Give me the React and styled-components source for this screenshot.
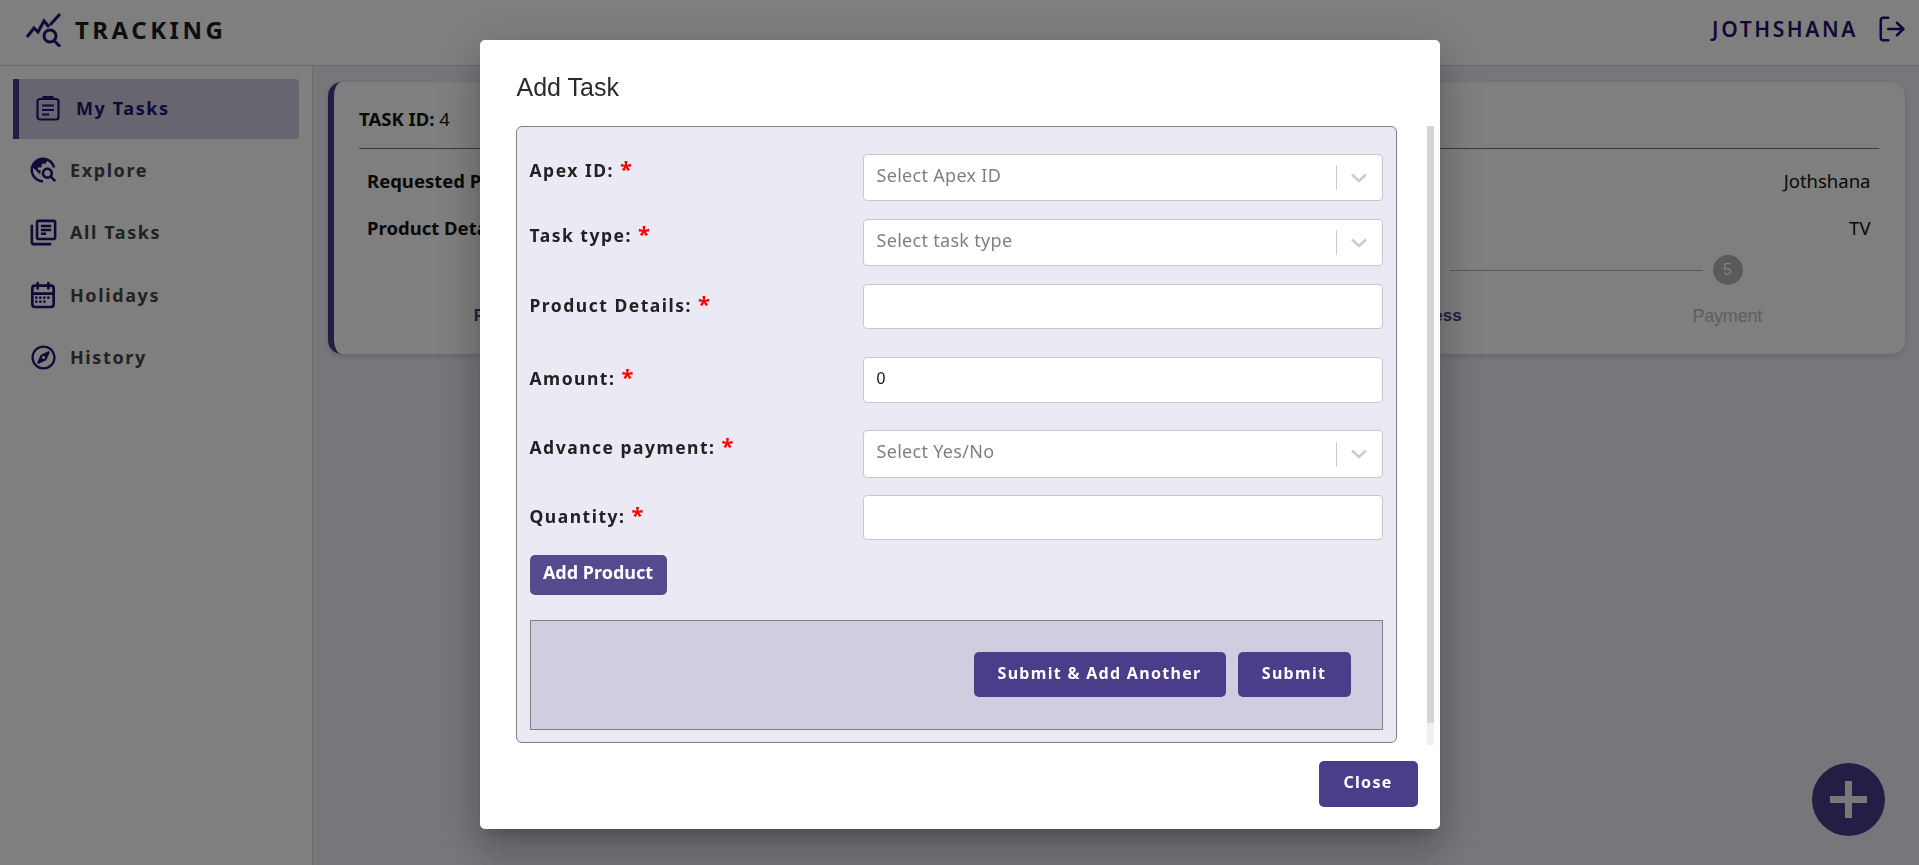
import styled, { createGlobalStyle } from "styled-components";
import { MdTravelExplore, MdOutlineLibraryBooks } from "react-icons/md";
import { TbCalendarMonth } from "react-icons/tb";
import { FaRegCompass } from "react-icons/fa";
import { FiLogOut } from "react-icons/fi";

const GlobalStyle = createGlobalStyle`
  html, body {
    margin: 0;
    height: 100%;
    overflow: hidden;
    background: #eeeef7;
    font-family: "Noto Sans", "Open Sans", sans-serif;
  }
  * { box-sizing: border-box; }
`;

const Page = styled.div`
  height: 865px;
  display: flex;
  flex-direction: column;
`;

const Header = styled.header`
  height: 66px;
  flex: none;
  background: #fff;
  border-bottom: 1px solid #d8d8d8;
  display: flex;
  align-items: center;
  justify-content: space-between;
  padding: 0 12px 0 26px;
`;

const Brand = styled.div`
  display: flex;
  align-items: center;
  gap: 13px;
  font-size: 24px;
  font-weight: 700;
  letter-spacing: 3.5px;
  color: #1c1c1c;
  margin-top: -6px;
`;

const UserBox = styled.div`
  display: flex;
  align-items: center;
  gap: 19px;
  font-size: 21px;
  font-weight: 600;
  letter-spacing: 2.6px;
  color: #1f1170;
  margin-top: -8px;
`;

const Body = styled.div`
  flex: 1;
  display: flex;
  min-height: 0;
`;

const Sidebar = styled.nav`
  width: 313px;
  flex: none;
  background: #fff;
  border-right: 1px solid #d8d8d8;
  padding: 13px 13px 0;
`;

const NavItem = styled.div`
  display: flex;
  align-items: center;
  height: ${(p) => (p.$active ? "60px" : "62.5px")};
  gap: ${(p) => (p.$active ? "12px" : "11px")};
  padding-left: ${(p) => (p.$active ? "13px" : "14px")};
  padding-bottom: ${(p) => (p.$active ? "3px" : "1px")};
  border-left: ${(p) => (p.$active ? "6px solid #4b3d89" : "0")};
  border-radius: ${(p) => (p.$active ? "0 4px 4px 0" : "0")};
  background: ${(p) => (p.$active ? "#cdcbe0" : "transparent")};
  color: ${(p) => (p.$active ? "#1f1170" : "#444")};
  font-size: 18px;
  font-weight: 700;
  letter-spacing: 1.6px;
`;

const IconSlot = styled.span`
  width: 32px;
  flex: none;
  display: flex;
  justify-content: center;
  color: #1f1170;
`;

const Main = styled.main`
  flex: 1;
  padding: 16px 15px 0 15px;
`;

const TaskCard = styled.section`
  height: 272px;
  background: #fff;
  border-left: 6px solid #4b3d89;
  border-radius: 14px;
  box-shadow: 0 2px 6px rgba(0, 0, 0, 0.15);
  padding: 23px 26px 0 25px;
`;

const TaskId = styled.div`
  font-size: 18.5px;
  line-height: 28px;
  color: #111;
  padding-bottom: 15px;
  border-bottom: 1px solid #777;
  b { font-weight: 700; }
`;

const InfoRow = styled.div`
  display: flex;
  justify-content: space-between;
  font-size: 18.5px;
  line-height: 28px;
  color: #111;
  padding: 0 8px;
  margin-top: ${(p) => p.$top}px;
  b { font-weight: 700; }
`;

const StepLine = styled.div`
  display: flex;
  align-items: center;
  padding: 0 136px 0 143px;
  margin-top: 13px;
`;

const Circle = styled.div`
  width: 30px;
  height: 30px;
  flex: none;
  border-radius: 50%;
  background: #b4b4b4;
  color: #fff;
  display: flex;
  align-items: center;
  justify-content: center;
  font: 16px "Liberation Sans", Arial, sans-serif;
`;

const Connector = styled.div`
  flex: 1;
  height: 1px;
  margin: 0 10px;
  background: #b4b4b4;
`;

const StepLabels = styled.div`
  display: grid;
  grid-template-columns: repeat(5, 302.5px);
  padding-left: 7px;
  margin-top: 19px;
`;

const StepLabel = styled.div`
  text-align: center;
  font: ${(p) => (p.$on ? "700 17px/24px" : "400 18px/24px")} "Liberation Sans", Arial, sans-serif;
  color: ${(p) => (p.$on ? "#4b3d89" : "#bcbcbc")};
  letter-spacing: ${(p) => (p.$on ? 0 : "-0.2px")};
`;

const Fab = styled.div`
  position: fixed;
  right: 34px;
  bottom: 29px;
  width: 73px;
  height: 73px;
  border-radius: 50%;
  background: #4b3d89;
  display: flex;
  align-items: center;
  justify-content: center;
`;

const Backdrop = styled.div`
  position: fixed;
  inset: 0;
  background: rgba(0, 0, 0, 0.5);
  display: flex;
  justify-content: center;
  padding-top: 40px;
`;

const Modal = styled.div`
  width: 960px;
  height: 789px;
  background: #fff;
  border-radius: 5px;
  box-shadow: 0 11px 15px -7px rgba(0, 0, 0, 0.2),
    0 24px 38px 3px rgba(0, 0, 0, 0.14), 0 9px 46px 8px rgba(0, 0, 0, 0.12);
  display: flex;
  flex-direction: column;
`;

const ModalTitle = styled.h2`
  margin: 0;
  height: 86px;
  flex: none;
  padding: 29px 0 0 37px;
  font: 400 25px/36px "Liberation Sans", Arial, sans-serif;
  color: #2b2b2b;
`;

const ScrollArea = styled.div`
  height: 619px;
  flex: none;
  display: flex;
  align-items: flex-start;
  margin: 0 6px 0 36px;
  gap: 30px;
`;

const ScrollTrack = styled.div`
  width: 7px;
  height: 100%;
  flex: none;
  background: #f1f1f1;
`;

const ScrollThumb = styled.div`
  height: 597px;
  background: #d5d5d8;
`;

const FormBox = styled.form`
  flex: 1;
  height: 617px;
  background: #ebe9f4;
  border: 1px solid #808080;
  border-radius: 6px;
  padding: 27px 13px 0 13px;
`;

const Row = styled.div`
  display: flex;
  align-items: flex-start;
  margin-bottom: ${(p) => p.$gap}px;
`;

const Label = styled.label`
  width: 333px;
  flex: none;
  padding-top: ${(p) => p.$top}px;
  font-size: 17.5px;
  font-weight: 700;
  line-height: 24px;
  letter-spacing: 1.5px;
  color: #222;
`;

const Star = styled.span`
  color: #f00;
  font-size: 22px;
  line-height: 1;
  margin-left: 6px;
`;

const SelectBox = styled.div`
  flex: 1;
  height: ${(p) => p.$h}px;
  background: #fff;
  border: 1px solid #c8c8c8;
  border-radius: 4px;
  display: flex;
  align-items: center;
  padding-left: 13px;
  font-size: 18px;
  letter-spacing: 0.3px;
  color: #808080;
`;

const Placeholder = styled.span`
  flex: 1;
  margin-top: -6px;
`;

const Separator = styled.span`
  width: 1px;
  height: 25px;
  background: #ccc;
`;

const Chevron = styled.span`
  width: 45px;
  display: flex;
  justify-content: center;
  color: #ccc;
`;

const TextInput = styled.input`
  flex: 1;
  height: ${(p) => p.$h}px;
  background: #fff;
  border: 1px solid #c8c8c8;
  border-radius: 4px;
  padding: 0 13px 3px;
  font: 16px "Liberation Sans", Arial, sans-serif;
  color: #111;
  outline: none;
`;

const AddButton = styled.button`
  display: block;
  width: 137px;
  height: 40px;
  border: 0;
  border-radius: 5px;
  background: #554a8e;
  color: #fff;
  font: 700 18px "Noto Sans", sans-serif;
  padding: 0 0 6px;
`;

const ActionPanel = styled.div`
  height: 110px;
  margin-top: 25px;
  background: #d0cde0;
  border: 1px solid #808080;
  display: flex;
  align-items: flex-start;
  justify-content: flex-end;
  gap: 12px;
  padding: 31px 31px 0 0;
`;

const PrimaryButton = styled.button`
  width: ${(p) => p.$w}px;
  height: ${(p) => p.$h}px;
  border: 0;
  border-radius: 5px;
  background: #4b3d89;
  color: #fff;
  font: 700 16px "Noto Sans", sans-serif;
  letter-spacing: 1.3px;
  padding: 0 0 4px;
`;

const ModalFooter = styled.div`
  flex: 1;
  display: flex;
  justify-content: flex-end;
  padding: 16px 22px 0 0;
`;

const ArrowDown = () => (
  <svg width="16" height="10" viewBox="0 0 16 10" fill="none" stroke="currentColor" strokeWidth="2.6">
    <path d="M1 1.5l7 6.5 7-6.5" />
  </svg>
);

const Logo = () => (
  <svg width="36" height="34" viewBox="0 0 36 34" fill="none" stroke="#1f1170" strokeWidth="3">
    <path d="M1 24l7-9 4 4 6-11 5 6" />
    <path d="M24 12L34 1" />
    <circle cx="24" cy="23" r="6" />
    <path d="M28 27.5l6 6" />
  </svg>
);

const ClipboardIcon = () => (
  <svg width="24" height="26" viewBox="0 0 24 26" fill="none" stroke="currentColor" strokeWidth="2.2">
    <rect x="1.5" y="4" width="21" height="20.5" rx="2.5" />
    <path d="M8 4V2.5h8V4" strokeWidth="3" />
    <path d="M6 10.5h12M6 15h12M6 19.5h7" />
  </svg>
);

const PlusIcon = () => (
  <svg width="37" height="37" viewBox="0 0 37 37" fill="#f0f0f6">
    <path d="M15 0h7v15h15v7H22v15h-7V22H0v-7h15z" />
  </svg>
);

const navItems = [
  { label: "My Tasks", icon: <ClipboardIcon />, active: true },
  { label: "Explore", icon: <MdTravelExplore size={30} /> },
  { label: "All Tasks", icon: <MdOutlineLibraryBooks size={31} /> },
  { label: "Holidays", icon: <TbCalendarMonth size={32} /> },
  { label: "History", icon: <FaRegCompass size={25} /> },
];

const steps = ["Requested", "Approved", "Assigned", "Progress", "Payment"];

function Field({ label, top, gap, children }) {
  return (
    <Row $gap={gap}>
      <Label $top={top}>
        {label}
        <Star>*</Star>
      </Label>
      {children}
    </Row>
  );
}

function Select({ placeholder, h }) {
  return (
    <SelectBox $h={h}>
      <Placeholder>{placeholder}</Placeholder>
      <Separator />
      <Chevron>
        <ArrowDown />
      </Chevron>
    </SelectBox>
  );
}

export default function App() {
  return (
    <Page>
      <GlobalStyle />
      <Header>
        <Brand>
          <Logo />
          TRACKING
        </Brand>
        <UserBox>
          JOTHSHANA
          <FiLogOut size={30} />
        </UserBox>
      </Header>

      <Body>
        <Sidebar>
          {navItems.map((item) => (
            <NavItem key={item.label} $active={item.active}>
              <IconSlot>{item.icon}</IconSlot>
              {item.label}
            </NavItem>
          ))}
        </Sidebar>
        <Main>
          <TaskCard>
            <TaskId>
              <b>TASK ID:</b> 4
            </TaskId>
            <InfoRow $top={18}>
              <b>Requested Person</b>
              <span>Jothshana</span>
            </InfoRow>
            <InfoRow $top={19}>
              <b>Product Details</b>
              <span>TV</span>
            </InfoRow>
            <StepLine>
              <Circle>1</Circle>
              <Connector />
              <Circle>2</Circle>
              <Connector />
              <Circle>3</Circle>
              <Connector />
              <Circle>4</Circle>
              <Connector />
              <Circle>5</Circle>
            </StepLine>
            <StepLabels>
              {steps.map((s) => (
                <StepLabel key={s} $on={s !== "Payment"}>
                  {s}
                </StepLabel>
              ))}
            </StepLabels>
          </TaskCard>
        </Main>
      </Body>

      <Fab>
        <PlusIcon />
      </Fab>

      <Backdrop>
        <Modal>
          <ModalTitle>Add Task</ModalTitle>
          <ScrollArea>
            <FormBox>
              <Field label="Apex ID:" top={3} gap={18}>
                <Select placeholder="Select Apex ID" h={47} />
              </Field>
              <Field label="Task type:" top={3} gap={18}>
                <Select placeholder="Select task type" h={47} />
              </Field>
              <Field label="Product Details:" top={8} gap={28}>
                <TextInput $h={45} readOnly />
              </Field>
              <Field label="Amount:" top={8} gap={27}>
                <TextInput $h={46} value="0" readOnly />
              </Field>
              <Field label="Advance payment:" top={4} gap={17}>
                <Select placeholder="Select Yes/No" h={48} />
              </Field>
              <Field label="Quantity:" top={8} gap={15}>
                <TextInput $h={45} readOnly />
              </Field>
              <AddButton type="button">Add Product</AddButton>
              <ActionPanel>
                <PrimaryButton type="button" $w={252} $h={45}>
                  Submit &amp; Add Another
                </PrimaryButton>
                <PrimaryButton type="button" $w={113} $h={45}>
                  Submit
                </PrimaryButton>
              </ActionPanel>
            </FormBox>
            <ScrollTrack>
              <ScrollThumb />
            </ScrollTrack>
          </ScrollArea>
          <ModalFooter>
            <PrimaryButton type="button" $w={99} $h={46}>
              Close
            </PrimaryButton>
          </ModalFooter>
        </Modal>
      </Backdrop>
    </Page>
  );
}
